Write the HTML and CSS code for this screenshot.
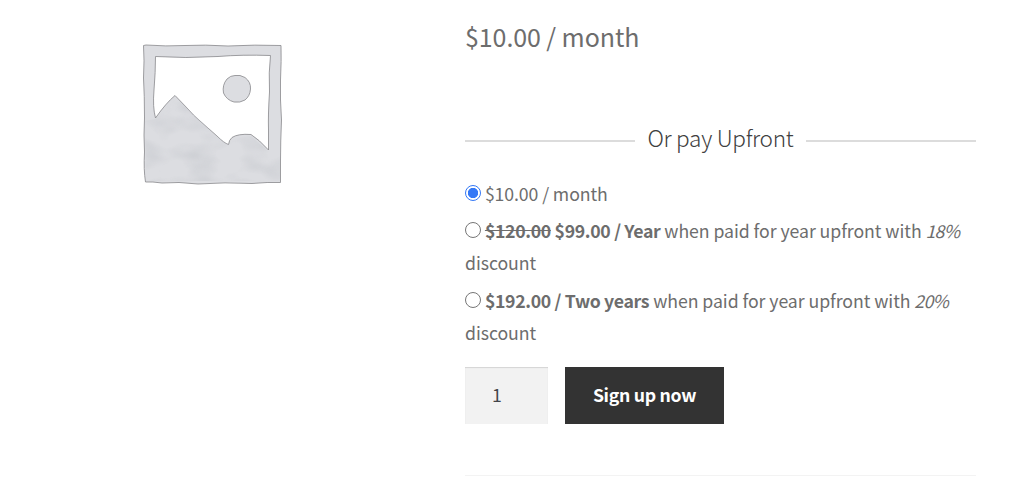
FILE: index.html
```
<!DOCTYPE html>
<html lang="en">
<head>
  <meta charset="UTF-8" />
  <meta name="viewport" content="width=device-width, initial-scale=1.0" />
  <title>Subscription</title>
  <link rel="stylesheet" href="styles.css">
</head>
<body>
  <div class="product">
    <div class="gallery">
      <svg class="placeholder" viewBox="0 0 165 165" width="165" height="165">
        <defs>
          <filter id="paint" x="0" y="0" width="100%" height="100%" color-interpolation-filters="sRGB">
            <feTurbulence type="fractalNoise" baseFrequency="0.035 0.06" numOctaves="2" seed="4" />
            <feColorMatrix values="0 0 0 0 0.78  0 0 0 0 0.79  0 0 0 0 0.81  1.3 0 0 0 -0.5" />
            <feComposite in2="SourceGraphic" operator="in" />
          </filter>
        </defs>
        <path class="shape" fill-rule="evenodd" d="M13.5 15.5 L16 15 Q36 16.5 55 15.5 Q75 14.5 98 16 Q125 14.5 151 15.5 Q151.500 30 150.500 50 Q150 70 151.500 90 Q150.500 112 150.500 130 L150.500 152.500 Q138 152 122 153.500 Q95 152 68 154 Q48 151.500 32 153 Q22 151.500 15.500 152 Q13.500 140 14.500 122 Q13.500 105 14.500 88 Q14.500 65 13.500 48 Q14.500 30 13.500 15.500 Z M25.500 26.500 Q55 28.500 88 26.500 Q112 24.500 140.500 25.500 Q138.500 42 139.500 62 Q138 85 138.500 100 L138.500 120 Q129 109.500 121 104.500 Q108 103.500 102 107.500 Q99 110 98.500 114.500 Q94 113 87 106 L70 91 Q63 85 58 79 L45 65.500 Q36 73 25.500 88 Q22.500 77 24 60 Q25.500 42 25.500 26.500 Z" />
        <path class="shape" d="M105 45.500 Q110 44.500 115 47.500 Q121 52 120.500 59 Q120 66 115 70 Q110 73 104 72 Q96.500 70 93.500 63 Q92 55 97 49 Q100.500 45.500 105 45.500 Z" />
        <path filter="url(#paint)" d="M15 91 L25.500 89 L45 67 L97 115 L102 108 L121 106 L138 121 L150 120 L150 151 L16 151 Z" />
      </svg>
    </div>
    <div class="summary">
      <p class="price">$10.00 / month</p>
      <div class="divider"><span>Or pay Upfront</span></div>
      <form class="cart">
        <label class="plan">
          <input type="radio" name="plan" checked />
          <span class="monthly">$10.00 / month</span>
        </label>
        <label class="plan">
          <input type="radio" name="plan" />
          <b><del>$120.00</del> $99.00 / Year</b> when paid for year upfront with <em>18%</em><br>discount
        </label>
        <label class="plan">
          <input type="radio" name="plan" />
          <b>$192.00 / Two years</b> when paid for year upfront with <em>20%</em><br>discount
        </label>
        <div class="actions">
          <input class="qty" type="text" value="1" />
          <button class="signup" type="button">Sign up now</button>
        </div>
      </form>
    </div>
  </div>
</body>
</html>
```
FILE: styles.css
```
* {
  box-sizing: border-box;
}
body {
  margin: 0;
  background: #fff;
  color: #6d6d6d;
  font-family: "Noto Sans CJK SC", "Noto Sans", sans-serif;
  font-size: 17.7px;
  line-height: 32px;
  overflow: hidden;
}
.product {
  display: flex;
  height: 499px;
}
.gallery {
  width: 465px;
  padding: 30px 0 0 130px;
}
.placeholder {
  display: block;
}
.shape {
  fill: #dcdde1;
  stroke: #88888c;
  stroke-width: 0.8;
}
.summary {
  width: 511px;
  height: 476px;
  padding-top: 16px;
  border-bottom: 1px solid #f3f3f3;
}
.price {
  margin: 0;
  font-size: 25px;
  letter-spacing: -0.08px;
  line-height: 40px;
}
.divider {
  display: flex;
  align-items: center;
  gap: 13px;
  margin-top: 62px;
  color: #404040;
  font-size: 22.6px;
  font-weight: 300;
  letter-spacing: -0.3px;
  line-height: 40px;
  white-space: nowrap;
}
.divider::before,
.divider::after {
  content: "";
  flex: 1;
  height: 2px;
  margin-top: 5px;
  background: #dcdcdc;
}
.cart {
  margin-top: 19px;
}
.plan {
  display: block;
  margin-bottom: 5px;
  letter-spacing: -0.06px;
  white-space: nowrap;
}
.plan:nth-child(2) {
  margin-bottom: 6px;
}
.plan input {
  appearance: none;
  width: 16px;
  height: 16px;
  margin: 0;
  border: 1px solid #767676;
  border-radius: 50%;
  vertical-align: 0;
}
.plan input:checked {
  border: 1.5px solid #3478f6;
  background: radial-gradient(#3478f6 4.8px, #fff 5.5px);
}
.plan b {
  letter-spacing: -0.34px;
}
.plan em {
  letter-spacing: -0.7px;
}
.monthly {
  letter-spacing: -0.1px;
}
.actions {
  display: flex;
  gap: 17px;
  margin-top: 18.5px;
}
.qty {
  width: 83px;
  height: 57px;
  padding: 0 0 2px 27px;
  border: none;
  background: #f2f2f2;
  box-shadow: inset 0 1px 1px rgba(0, 0, 0, 0.125);
  color: #43454b;
  font: inherit;
}
.signup {
  width: 159px;
  height: 57px;
  padding: 0 0 2px;
  border: none;
  background: #333;
  color: #fff;
  font: inherit;
  font-weight: 700;
  letter-spacing: -0.3px;
}
```
